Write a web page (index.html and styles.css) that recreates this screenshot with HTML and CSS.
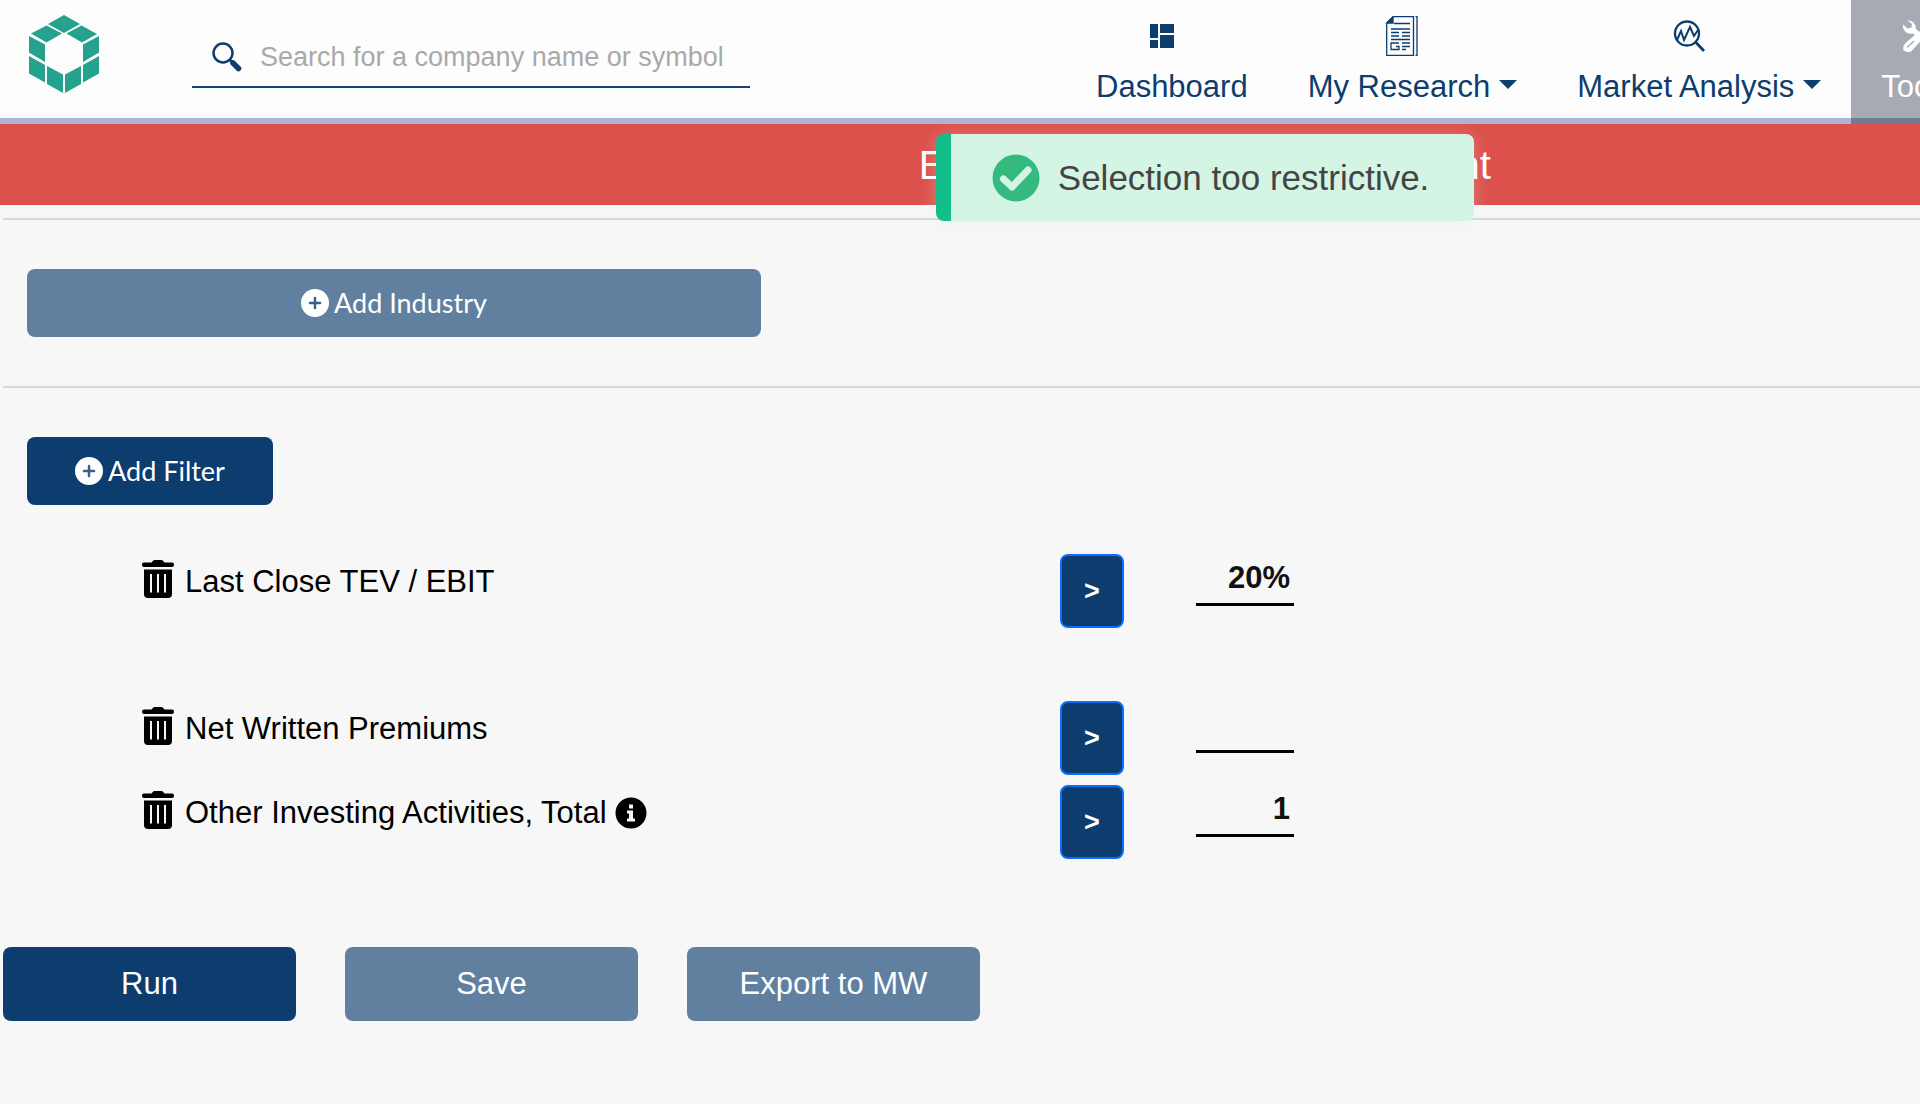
FILE: index.html
```html
<!DOCTYPE html>
<html lang="en">
<head>
<meta charset="utf-8">
<title>Screener</title>
<link rel="stylesheet" href="styles.css">
</head>
<body>
<svg class="sprite" aria-hidden="true">
  <symbol id="trash" viewBox="0 0 32 38">
    <path d="M2 2.5H9.5L11 .8Q11.600 0 12.700 0H19.300Q20.400 0 21 .8L22.500 2.500H30A2 2 0 0 1 32 4.500V5A2 2 0 0 1 30 7H2A2 2 0 0 1 0 5V4.500A2 2 0 0 1 2 2.500ZM2 9.500H30V34Q30 38 26 38H6Q2 38 2 34ZM8 14V32.500H10V14ZM15 14V32.500H17V14ZM22 14V32.500H24V14Z" fill-rule="evenodd"/>
  </symbol>
  <symbol id="plus" viewBox="0 0 28 28">
    <circle cx="14" cy="14" r="14" fill="#fff"/>
    <path d="M14 9V19M9 14H19" stroke="#3a5f88" stroke-width="2.500" stroke-linecap="round"/>
  </symbol>
</svg>

<header class="topbar">
  <a class="logo" href="#" aria-label="Home">
    <svg width="70" height="78" viewBox="0 0 70 78" fill="#24a28d">
      <path d="M35 0 51 9 35 18 19 9ZM17.500 10.500 33 18.500 17.500 27.500 2 18.500ZM52.500 10.500 68 19 53 27.500 37.500 18.500ZM0 21 16 29.500V47L0 37.500ZM70 21V37.500L54 47V29.500ZM0 41 16 50V67.500L0 58.500ZM70 41V58.500L54 67.500V50ZM18 51 34 59.500V78L18 69ZM52 51V69L36 78V59.500Z"/>
    </svg>
  </a>
  <label class="search">
    <svg width="30" height="30" viewBox="0 0 30 30" fill="none" stroke="#0d3d6e">
      <circle cx="11" cy="11" r="9.500" stroke-width="2.500"/>
      <path d="M21 21 26.500 26.500" stroke-width="5.500" stroke-linecap="round"/>
      <path d="M17.500 17.500 21 21" stroke-width="2.500"/>
    </svg>
    <input type="text" placeholder="Search for a company name or symbol" aria-label="Search for a company name or symbol">
  </label>
  <nav class="nav">
    <a class="nav-item" href="#">
      <svg width="40" height="40" viewBox="0 0 40 40" fill="#0d3d6e"><path d="M8 8H16V22H8ZM18 8H32V17H18ZM8 24H16V32H8ZM18 19H32V32H18Z"/></svg>
      <span>Dashboard</span>
    </a>
    <a class="nav-item" href="#">
      <svg width="40" height="40" viewBox="0 0 40 40" fill="none" stroke="#0d3d6e" stroke-width="1.300"><path d="M11 .7H31.500V39.300H4.700V7ZM33.500 .7H35V39.300H33.500"/><path d="M11 1V7H5Z" fill="#0d3d6e"/><path d="M12 7.500H28M9 13H28M9 16.500H17M20 16.500H28M9 20H17M20 20H28M9 23.500H28M20 27H28M20 30.500H28M20 33.500H24M17 27H9V33.500H17V30.500H14"/></svg>
      <span class="caret">My Research</span>
    </a>
    <a class="nav-item" href="#">
      <svg width="40" height="40" viewBox="0 0 40 40" fill="none" stroke="#0d3d6e" stroke-width="2.300"><circle cx="18" cy="17.500" r="12"/><path d="M26.500 26 35 35" stroke-width="2.800"/><path d="M8 24 12 15 15 24 21 11 25 20 29 14" stroke-width="2"/></svg>
      <span class="caret">Market Analysis</span>
    </a>
    <a class="nav-item active" href="#">
      <svg width="40" height="40" viewBox="0 0 40 40" fill="#fff"><path d="M6.500 4.500A8 8 0 0 1 15 13L34 30A3 3 0 0 1 29 35L12 17.500A8 8 0 0 1 2 8.500L6.500 12.500L10.500 11.500L11 8Z"/><path d="M30 4 34 8 28 14 17 28 10 35.500Q5 37 2.500 34Q1.500 31 4 27.500L12 20.500L24 11Z"/><path d="M6 31.500 13 25" fill="none" stroke="#a6abb3" stroke-width="1.500"/></svg>
      <span class="caret">Tools</span>
    </a>
  </nav>
</header>

<div class="banner">
  <div class="banner-title"><span>E</span><span>nt</span>
    <div class="toast" role="status">
      <svg width="48" height="48" viewBox="0 0 48 48"><circle cx="24" cy="24" r="23.500" fill="#34ba7e"/><path d="M11.500 25 20 33 36 16" fill="none" stroke="#d4f5e4" stroke-width="7" stroke-linecap="round" stroke-linejoin="round"/></svg>
      <span>Selection too restrictive.</span>
    </div>
  </div>
</div>

<main class="screener">
  <section class="panel">
    <button class="btn soft industry"><svg width="28" height="28"><use href="#plus"/></svg>Add Industry</button>
  </section>
  <section class="panel">
    <button class="btn add"><svg width="28" height="28"><use href="#plus"/></svg>Add Filter</button>
  </section>

  <ul class="filters">
    <li class="filter spaced">
      <button class="trash" aria-label="Remove filter"><svg width="32" height="38"><use href="#trash"/></svg></button>
      <label class="name" for="f1">Last Close TEV / EBIT</label>
      <button class="op">&gt;</button>
      <input class="value" id="f1" type="text" value="20%">
    </li>
    <li class="filter">
      <button class="trash" aria-label="Remove filter"><svg width="32" height="38"><use href="#trash"/></svg></button>
      <label class="name" for="f2">Net Written Premiums</label>
      <button class="op">&gt;</button>
      <input class="value" id="f2" type="text" value="">
    </li>
    <li class="filter">
      <button class="trash" aria-label="Remove filter"><svg width="32" height="38"><use href="#trash"/></svg></button>
      <label class="name" for="f3">Other Investing Activities, Total
        <svg width="32" height="32" viewBox="0 0 32 32"><circle cx="16" cy="16" r="15.500"/><path d="M14 7.500H18V11.500H14ZM12 13.500H18V21.500H20V24.500H12V21.500H14V16.500H12Z" fill="#f7f7f7"/></svg>
      </label>
      <button class="op">&gt;</button>
      <input class="value" id="f3" type="text" value="1">
    </li>
  </ul>

  <div class="actions">
    <button class="btn">Run</button>
    <button class="btn soft">Save</button>
    <button class="btn soft">Export to MW</button>
  </div>
</main>
</body>
</html>
```
FILE: styles.css
```css
* { box-sizing: border-box; }
body {
  margin: 0;
  background: #f7f7f7;
  color: #000;
  font-family: "Liberation Sans", Arial, sans-serif;
  font-size: 31px;
  line-height: 40px;
  overflow-x: hidden;
}
button, input { font: inherit; }
button { cursor: pointer; }
.sprite { position: absolute; width: 0; height: 0; }

.topbar {
  display: flex;
  height: 124px;
  background: #fdfdfd;
  border-bottom: 6px solid #aeb5d1;
}
.logo { flex: none; margin: 15px 93px 0 29px; }
.logo svg { display: block; }
.search {
  flex: none;
  display: flex;
  align-items: center;
  gap: 16px;
  width: 558px;
  height: 64px;
  margin-top: 24px;
  padding: 3px 0 0 20px;
  border-bottom: 2px solid #124579;
}
.search input {
  flex: 1;
  min-width: 0;
  padding: 0 2px;
  border: 0;
  background: none;
  font-size: 27px;
  outline: 0;
}
.search input::placeholder { color: #a9a9a9; opacity: 1; }
.nav {
  flex: none;
  display: flex;
  height: 124px;
  margin-left: 316px;
}
.nav-item {
  display: flex;
  flex-direction: column;
  align-items: center;
  gap: 11px;
  padding: 16px 30px 0;
  color: #0d3d6e;
  text-decoration: none;
  white-space: nowrap;
}
.nav-item svg { display: block; margin-right: 20px; }
.caret::after {
  content: "";
  display: inline-block;
  margin-left: 9px;
  vertical-align: 8px;
  border: 9px solid transparent;
  border-top-color: currentColor;
  border-bottom: 0;
}
.active {
  background: #a6abb3;
  border-bottom: 6px solid #737b92;
  color: #fff;
}

.banner {
  display: flex;
  justify-content: center;
  height: 81px;
  padding-left: 25.5%;
  background: #dc514c;
  color: #fff;
  font-size: 40px;
  line-height: 82px;
}
.banner-title {
  position: relative;
  display: flex;
  justify-content: space-between;
  width: 572px;
}
.toast {
  position: absolute;
  top: 10px;
  left: 50%;
  transform: translateX(-50%);
  display: flex;
  align-items: center;
  gap: 18px;
  width: 538px;
  height: 87px;
  padding-left: 41px;
  border-left: 15px solid #14be8a;
  border-radius: 8px;
  background: #d4f5e4;
  box-shadow: 0 3px 16px rgba(230, 230, 230, .3);
  color: #444;
  font-size: 35px;
  line-height: 40px;
  white-space: nowrap;
}
.toast svg { flex: none; }

.screener { padding: 13px 0 24px 3px; }
.panel {
  border-top: 2px solid #d8d8d8;
  padding: 49px 24px;
}
.btn {
  display: flex;
  align-items: center;
  justify-content: center;
  gap: 5px;
  width: 293px;
  height: 74px;
  padding: 0;
  border: 0;
  border-radius: 8px;
  background: #0d3d6e;
  color: #fff;
}
.btn.soft { background: #617f9f; }
.industry, .add {
  height: 68px;
  font-family: Lato, sans-serif;
  font-size: 27px;
}
.industry { width: 734px; }
.add { width: 246px; }

.filters {
  list-style: none;
  margin: 0;
  padding: 0;
}
.filter {
  display: grid;
  grid-template-columns: 43px 875px 64px 98px;
  align-items: start;
  height: 84px;
  padding-left: 139px;
}
.filter.spaced { height: 147px; }
.trash {
  display: block;
  padding: 6px 0 0;
  border: 0;
  background: none;
  text-align: left;
}
.trash svg { display: block; }
.name {
  display: flex;
  align-items: center;
  gap: 8px;
  padding-top: 8px;
}
.op {
  height: 74px;
  padding: 0;
  border: 2px solid #0d6efd;
  border-radius: 8px;
  background: #0d3d6e;
  color: #fff;
  font-size: 27px;
  font-weight: 700;
}
.value {
  width: 98px;
  height: 52px;
  margin-left: 72px;
  padding: 0 4px 2px 0;
  border: 0;
  border-bottom: 3px solid #000;
  background: none;
  color: #111;
  font-weight: 700;
  text-align: right;
  outline: 0;
}

.actions {
  display: flex;
  gap: 49px;
  padding-top: 78px;
}
```
